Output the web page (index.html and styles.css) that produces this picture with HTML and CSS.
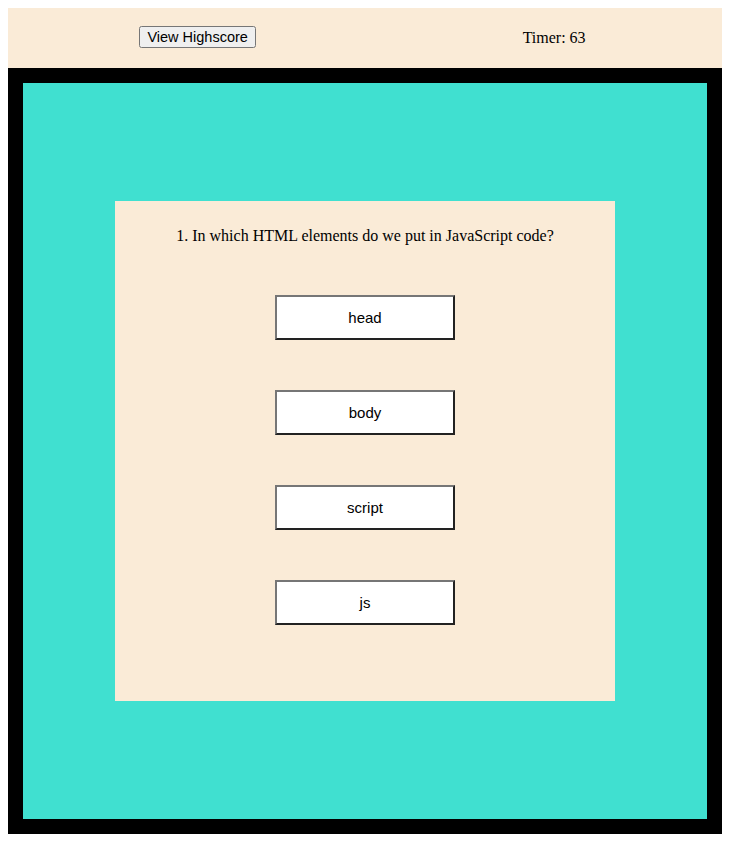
FILE: index.html
```html
<!DOCTYPE html>
<html>
<head>
<meta charset="utf-8">
<link rel="stylesheet" href="styles.css">
</head>
<body>
<header class="topbar">
  <button class="hs-btn">View Highscore</button>
  <span class="timer">Timer: 63</span>
</header>
<main class="stage">
  <section class="card">
    <p class="question">1. In which HTML elements do we put in JavaScript code?</p>
    <div class="answers">
      <button class="answer">head</button>
      <button class="answer">body</button>
      <button class="answer">script</button>
      <button class="answer">js</button>
    </div>
  </section>
</main>
</body>
</html>
```
FILE: styles.css
```css
html, body {
  background: #ffffff;
}
body {
  margin: 8px;
  font-family: "Liberation Serif", "Times New Roman", serif;
  font-size: 16px;
  color: #000;
}
.topbar {
  height: 60px;
  background: #faebd7;
  display: flex;
  justify-content: space-around;
  align-items: center;
}
.hs-btn {
  font-family: "Liberation Sans", Arial, sans-serif;
  font-size: 14.5px;
  padding: 1px 6px;
  color: #000;
  margin: -2px 0 0 -2px;
}
.timer {
  font-size: 16px;
  margin-right: 3px;
}
.stage {
  border: 15px solid #000;
  background: #40e0d0;
  height: 736px;
  display: flex;
  align-items: center;
  justify-content: center;
}
.card {
  width: 500px;
  height: 500px;
  box-sizing: border-box;
  background: #faebd7;
  padding-top: 26px;
  display: flex;
  flex-direction: column;
  align-items: center;
}
.question {
  margin: 0;
  line-height: 18px;
  text-align: center;
}
.answers {
  margin-top: 50px;
  display: flex;
  flex-direction: column;
  align-items: center;
  gap: 50px;
}
.answer {
  width: 180px;
  height: 45px;
  margin: 0;
  padding: 0;
  background: #fff;
  border-width: 2px;
  border-style: solid;
  border-color: #767676 #222 #222 #767676;
  font-family: "Liberation Sans", Arial, sans-serif;
  font-size: 15px;
  color: #000;
}
```
